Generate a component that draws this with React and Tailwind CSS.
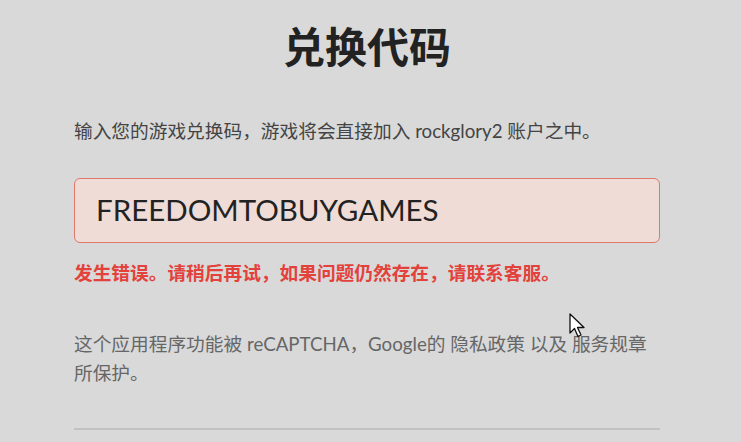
import React from "react";

const font = {fontFamily: 'Lato, "Noto Sans CJK SC", sans-serif'}

// Mouse pointer seen in the screenshot
const Cursor = () => (
  <svg className="absolute left-[569px] top-[313px]" width="18" height="26" viewBox="0 0 18 26">
    <path d="M1 1 L1 20 L5.5 15.5 L9 23.5 L12 22 L8.5 14.5 L15 14.5 Z"
          fill="#fff" stroke="#111" strokeWidth="1.3" strokeLinejoin="round"/>
  </svg>
)

const App = () => (
  <div className="relative min-h-[442px] w-full bg-[#d9d9d9] overflow-hidden" style={font}>
    <div className="ml-[74px] w-[586px] pt-[25px]">
      <h1 className="text-center text-[42px] font-bold leading-[44px] text-[#222]">
        兑换代码
      </h1>

      <p className="mt-[49px] text-[18.7px] leading-[26px] text-[#444]">
        输入您的游戏兑换码，游戏将会直接加入 rockglory2 账户之中。
      </p>

      <div className="mt-[34px] flex h-[65px] items-center rounded-[6px] border-[1.5px] border-[#e0776d] bg-[#efdcd6] px-[21px]">
        <span className="text-[29.5px] text-[#222]">FREEDOMTOBUYGAMES</span>
      </div>

      <p className="mt-[17px] text-[18.7px] font-bold leading-[26px] text-[#e3413b]">
        发生错误。请稍后再试，如果问题仍然存在，请联系客服。
      </p>

      <p className="mt-[44px] text-[18.7px] leading-[29px] text-[#666]">
        这个应用程序功能被 reCAPTCHA，Google的 <a className="text-[#666]">隐私政策</a> 以及 <a className="text-[#666]">服务规章</a> 所保护。
      </p>

      <div className="mt-[40px] h-[2px] bg-[#c2c2c2]"/>
    </div>
    <Cursor/>
  </div>
)

export default App
